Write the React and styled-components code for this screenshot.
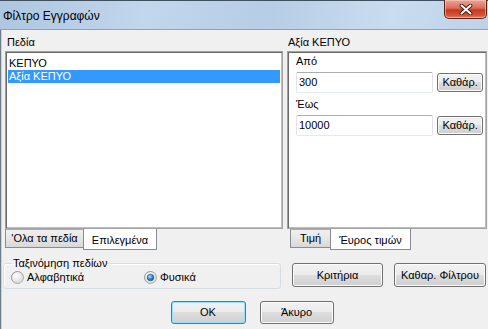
import React, { useState } from 'react'
import styled, { createGlobalStyle, css } from 'styled-components'

const GlobalStyle = createGlobalStyle`
  html, body {
    margin: 0;
    padding: 0;
    background: #f0f0f0;
    overflow: hidden;
  }
  body {
    font-family: "Liberation Sans", Arial, sans-serif;
    font-size: 11px;
    color: #000;
  }
`

const Window = styled.div`
  width: 488px;
  height: 329px;
  display: flex;
  flex-direction: column;
  overflow: hidden;
`

const TitleBar = styled.div`
  height: 28px;
  flex: none;
  display: flex;
  justify-content: space-between;
  align-items: flex-start;
  padding-right: 1px;
  border-top: 1px solid #3e4f60;
  border-bottom: 1px solid #8da3bb;
  background: linear-gradient(100deg, #aec6e0 0%, #c2d6ec 30%, #b7cde5 55%, #cadcef 80%, #bdd2e8 100%);
`

const Title = styled.div`
  font-size: 12px;
  line-height: 15px;
  padding: 8px 0 0 3px;
  color: #000;
`

const CloseButton = styled.button`
  width: 43px;
  height: 19px;
  margin-top: -1px;
  padding: 0;
  border: 1px solid #5f2418;
  border-top: none;
  border-radius: 0 0 5px 5px;
  background: linear-gradient(to bottom, #eaa597 0%, #dc6e58 45%, #c8391d 55%, #d2553a 85%, #e3866c 100%);
  box-shadow: inset 0 0 0 1px rgba(255, 210, 200, 0.5);
  display: flex;
  align-items: center;
  justify-content: center;
`

const Client = styled.div`
  flex: 1;
  display: flex;
  flex-direction: column;
  border-left: 1px solid #6f7c89;
  box-shadow: inset 1px 0 0 #c8d3de;
  padding-left: 4px;
`

const Columns = styled.div`
  display: grid;
  grid-template-columns: 278px 200px;
  column-gap: 4px;
`

const Pane = styled.div`
  display: flex;
  flex-direction: column;
`

const Caption = styled.div`
  height: 21px;
  box-sizing: border-box;
  padding: 6px 0 0 ${p => p.$indent || 2}px;
  line-height: 13px;
`

const sunken = css`
  box-sizing: border-box;
  height: 178px;
  background: #fff;
  border: 1px solid;
  border-color: #a0a0a0 #a3a3a3 #a3a3a3 #a0a0a0;
  box-shadow: inset 1px 1px 0 #696969, inset -1px -1px 0 #bdbdbd;
`

const ListBox = styled.div`
  ${sunken};
  padding: 2px 2px;
`

const ListItem = styled.div`
  height: 13px;
  line-height: 13px;
  padding-left: 1px;
  margin-top: ${p => (p.$first ? '3px' : '0')};
  background: ${p => (p.$selected ? '#3399ff' : 'transparent')};
  color: ${p => (p.$selected ? '#fff' : '#000')};
`

const ValuePanel = styled.div`
  ${sunken};
  padding: 3px 3px 0 8px;
`

const FieldLabel = styled.div`
  line-height: 13px;
  margin-top: ${p => p.$gap || 0}px;
  margin-bottom: 3px;
`

const FieldRow = styled.div`
  display: flex;
  align-items: center;
  gap: 4px;
  height: 22px;
`

const TextBox = styled.div`
  width: 138px;
  height: 21px;
  box-sizing: border-box;
  padding-left: 2px;
  line-height: 19px;
  background: #fff;
  border: 1px solid;
  border-color: #abadb3 #e2e3ea #e3e9ef #e2e3ea;
  border-radius: 2px;
`

const Button = styled.button`
  font: inherit;
  color: #000;
  width: ${p => p.$w}px;
  height: ${p => p.$h || 23}px;
  padding: 0;
  box-sizing: border-box;
  border: 1px solid ${p => (p.$default ? '#3c7fb1' : '#707070')};
  border-radius: 3px;
  background: linear-gradient(to bottom, #f2f2f2 0%, #ebebeb 49%, #dddddd 50%, #cfcfcf 100%);
  box-shadow: inset 0 0 0 1px ${p => (p.$default ? '#94e1fd' : '#fcfcfc')};
  line-height: 13px;
`

const TabStrip = styled.div`
  height: 22px;
  display: flex;
  align-items: flex-start;
  padding-left: ${p => p.$indent || 0}px;
`

const Tab = styled.div`
  width: ${p => p.$w}px;
  box-sizing: border-box;
  text-align: center;
  ${p =>
    p.$active
      ? css`
          height: 21px;
          line-height: 19px;
          padding-top: 2px;
          background: #fff;
          border: 1px solid #898c95;
          border-top: none;
          margin-left: -1px;
          position: relative;
        `
      : css`
          height: 19px;
          line-height: 17px;
          background: linear-gradient(to bottom, #f0f0f0 0%, #e6e6e6 50%, #d8d8d8 100%);
          border: 1px solid #898c95;
          border-top-color: #acacac;
        `}
`

const Bottom = styled.div`
  display: grid;
  grid-template-columns: 278px 200px;
  column-gap: 4px;
`

const GroupBox = styled.fieldset`
  margin: 6px 0 0 -2px;
  width: 278px;
  box-sizing: border-box;
  padding: 1px 0 4px 7px;
  border: 1px solid #d5dfe5;
  border-radius: 3px;
  box-shadow: inset 1px 1px 0 #fff;
  display: grid;
  grid-template-columns: 133px auto;
`

const Legend = styled.legend`
  padding: 0 1px;
  margin-left: 1px;
  line-height: 13px;
`

const RadioOption = styled.label`
  display: flex;
  align-items: center;
  gap: 3px;
  height: 13px;
  line-height: 13px;
`

const ActionRow = styled.div`
  display: flex;
  gap: 11px;
  padding: 12px 0 0 5px;
`

const DialogRow = styled.div`
  display: flex;
  justify-content: center;
  gap: 14px;
  padding-left: 11px;
  margin-top: 12px;
`

function CloseGlyph() {
  return (
    <svg width="14" height="11" viewBox="0 0 14 11">
      <path d="M2.5 1.5 L11.5 9.5 M11.5 1.5 L2.5 9.5" stroke="#4a160c" strokeWidth="3.8" strokeLinecap="round" />
      <path d="M2.5 1.5 L11.5 9.5 M11.5 1.5 L2.5 9.5" stroke="#fff" strokeWidth="2" strokeLinecap="round" />
    </svg>
  )
}

function Radio({ checked }) {
  return (
    <svg width="13" height="13" viewBox="0 0 13 13">
      <defs>
        <linearGradient id="rg-ring" x1="0" y1="0" x2="1" y2="1">
          <stop offset="0" stopColor="#8a8a8a" />
          <stop offset="1" stopColor="#b5b5b5" />
        </linearGradient>
        <radialGradient id="rg-fill" cx="0.4" cy="0.35" r="0.7">
          <stop offset="0" stopColor="#ffffff" />
          <stop offset="1" stopColor="#d6d6d6" />
        </radialGradient>
        <radialGradient id="rg-dot" cx="0.4" cy="0.35" r="0.7">
          <stop offset="0" stopColor="#b9e5fb" />
          <stop offset="0.5" stopColor="#3d8fd4" />
          <stop offset="1" stopColor="#14539a" />
        </radialGradient>
      </defs>
      <circle cx="6.5" cy="6.5" r="6" fill="url(#rg-fill)" stroke="url(#rg-ring)" />
      {checked && <circle cx="6.5" cy="6.5" r="3.3" fill="url(#rg-dot)" stroke="#1c4f86" strokeWidth="0.6" />}
    </svg>
  )
}

export default function App() {
  const [order, setOrder] = useState('natural')

  return (
    <Window>
      <GlobalStyle />
      <TitleBar>
        <Title>Φίλτρο Εγγραφών</Title>
        <CloseButton aria-label="close">
          <CloseGlyph />
        </CloseButton>
      </TitleBar>

      <Client>
        <Columns>
          <Pane>
            <Caption>Πεδία</Caption>
            <ListBox>
              <ListItem $first>ΚΕΠΥΟ</ListItem>
              <ListItem $selected>Αξία ΚΕΠΥΟ</ListItem>
            </ListBox>
            <TabStrip>
              <Tab $w={79}>'Ολα τα πεδία</Tab>
              <Tab $w={74} $active>Επιλεγμένα</Tab>
            </TabStrip>
          </Pane>

          <Pane>
            <Caption $indent={1}>Αξία ΚΕΠΥΟ</Caption>
            <ValuePanel>
              <FieldLabel>Από</FieldLabel>
              <FieldRow>
                <TextBox>300</TextBox>
                <Button $w={46} $h={19}>Καθάρ.</Button>
              </FieldRow>
              <FieldLabel $gap={5}>Έως</FieldLabel>
              <FieldRow>
                <TextBox>10000</TextBox>
                <Button $w={46} $h={19}>Καθάρ.</Button>
              </FieldRow>
            </ValuePanel>
            <TabStrip $indent={3}>
              <Tab $w={41}>Τιμή</Tab>
              <Tab $w={81} $active>Έυρος τιμών</Tab>
            </TabStrip>
          </Pane>
        </Columns>

        <Bottom>
          <GroupBox>
            <Legend>Ταξινόμηση πεδίων</Legend>
            <RadioOption onClick={() => setOrder('alpha')}>
              <Radio checked={order === 'alpha'} />
              Αλφαβητικά
            </RadioOption>
            <RadioOption onClick={() => setOrder('natural')}>
              <Radio checked={order === 'natural'} />
              Φυσικά
            </RadioOption>
          </GroupBox>
          <ActionRow>
            <Button $w={91} $h={24}>Κριτήρια</Button>
            <Button $w={92} $h={24}>Καθαρ. Φίλτρου</Button>
          </ActionRow>
        </Bottom>

        <DialogRow>
          <Button $w={75} $default>OK</Button>
          <Button $w={74}>Άκυρο</Button>
        </DialogRow>
      </Client>
    </Window>
  )
}
